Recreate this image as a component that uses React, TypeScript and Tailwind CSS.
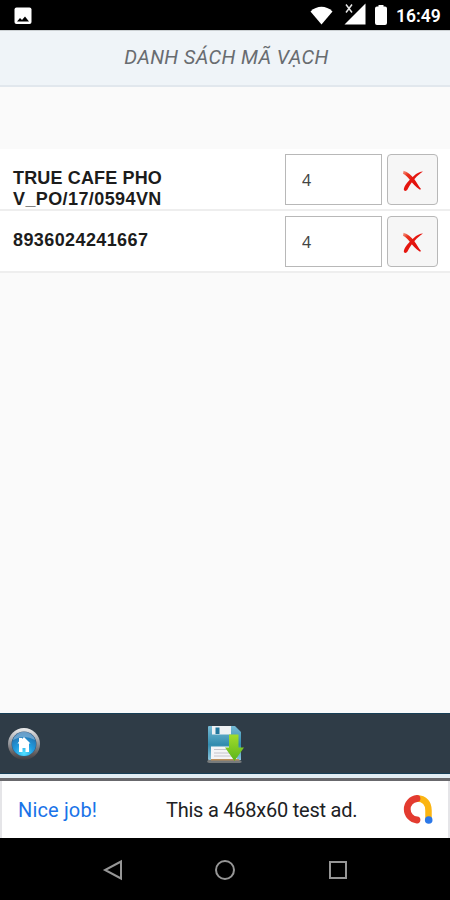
import { useState } from "react";

type BarcodeItem = {
  id: string;
  lines: string[];
  quantity: string;
};

const initialItems: BarcodeItem[] = [
  { id: "1", lines: ["TRUE CAFE PHO", "V_PO/17/0594VN"], quantity: "4" },
  { id: "2", lines: ["8936024241667"], quantity: "4" },
];

function StatusBar() {
  return (
    <div className="flex h-[30px] shrink-0 items-center bg-black pl-[14px] pr-[10px] text-white">
      <svg width="18" height="18" viewBox="0 0 18 18" className="mt-[1px]">
        <rect x="0.5" y="0.5" width="17" height="16.5" rx="2" fill="#fff" />
        <path d="M3 14.500 6 11l2 2 3-3.500 4 5Z" fill="#000" />
      </svg>
      <svg width="23" height="19" viewBox="0 0 23 19" className="ml-auto">
        <path d="M0.5 5.5C7-.7 16-.7 22.5 5.5L11.5 18.5Z" fill="#fff" />
      </svg>
      <svg width="22" height="22" viewBox="0 0 22 22" className="ml-[11px] -mt-[2px]">
        <path d="M21.500.500v21H.500Z" fill="#fff" />
        <path d="M0 0h9.500v10.500H0Z" fill="#000" />
        <path d="m2 1.5 6 8m0-8-6 8" stroke="#e4e4e4" strokeWidth="1.5" />
      </svg>
      <svg width="12" height="20" viewBox="0 0 12 20" className="ml-[9px]">
        <path
          d="M3.500 0h5v1.500H10a2 2 0 0 1 2 2v14.500a2 2 0 0 1-2 2H2a2 2 0 0 1-2-2V3.500a2 2 0 0 1 2-2h1.500Z"
          fill="#fff"
        />
      </svg>
      <span className="ml-[9px] w-[44px] whitespace-nowrap pt-[3px] font-['Roboto',sans-serif] text-[17.500px] font-semibold leading-none">
        16:49
      </span>
    </div>
  );
}

function DeleteIcon() {
  return (
    <svg width="22" height="22" viewBox="0 0 22 22" className="mt-[2px] ml-[1px]">
      <defs>
        <linearGradient id="cross" x1="0" y1="0" x2="0.6" y2="0.7">
          <stop offset="0" stopColor="#f5a08c" />
          <stop offset="0.35" stopColor="#e9301c" />
          <stop offset="1" stopColor="#e3100c" />
        </linearGradient>
      </defs>
      <path d="M1.500.800C6 2 9.500 5.500 12 8.700c3 3.700 4 6.800 7 10.300l-1 .8C13.500 17 10.500 13 8 10 5.800 7.300 3.500 5 1 3.800Z" fill="url(#cross)" />
      <path d="M21 1.500C15.500 5 9.500 11.500 6 18.500c-1 3-4 3-4.200 1 0-3.500 5.200-9.500 9.700-13.300C15 3 18 1.500 21 1.500Z" fill="#e5160f" />
    </svg>
  );
}

function HomeIcon() {
  return (
    <svg width="34" height="34" viewBox="0 0 34 34">
      <defs>
        <linearGradient id="rim" x1="0" y1="0" x2="0" y2="1">
          <stop offset="0" stopColor="#ededee" />
          <stop offset="0.5" stopColor="#929499" />
          <stop offset="0.8" stopColor="#625c5c" />
          <stop offset="1" stopColor="#3b3d43" />
        </linearGradient>
        <radialGradient id="glass" cx="0.5" cy="0.88" r="0.85">
          <stop offset="0" stopColor="#53e2ff" />
          <stop offset="0.45" stopColor="#209ce0" />
          <stop offset="1" stopColor="#256ba5" />
        </radialGradient>
      </defs>
      <circle cx="17" cy="17" r="16" fill="url(#rim)" />
      <circle cx="17" cy="17" r="12.500" fill="#35597a" />
      <circle cx="17" cy="17" r="12" fill="url(#glass)" />
      <path d="M6 13a11.500 11.500 0 0 1 22 0Q17 7 6 13Z" fill="#a9cde9" opacity="0.5" />
      <path d="m17 10 6.500 6.500H22V25h-3.500v-4h-3v4H12v-8.500h-1.500l1.500-2V11h3v1Z" fill="#fff" />
    </svg>
  );
}

function SaveIcon() {
  return (
    <svg width="38" height="39" viewBox="0 0 38 39" className="ml-[2px] mt-[1px]">
      <defs>
        <linearGradient id="disk" x1="0" y1="0" x2="0" y2="1">
          <stop offset="0" stopColor="#76bad4" />
          <stop offset="0.55" stopColor="#318caf" />
          <stop offset="1" stopColor="#8cc5dd" />
        </linearGradient>
        <linearGradient id="arrow" x1="0" y1="0" x2="0" y2="1">
          <stop offset="0" stopColor="#a2dd2b" />
          <stop offset="1" stopColor="#5bb51b" />
        </linearGradient>
      </defs>
      <path d="M1 35h32l2 2-2 1H2l-2-1Z" fill="#777b7c" />
      <path d="M2 1h26l6 6v28H2a1 1 0 0 1-1-1V2a1 1 0 0 1 1-1Z" fill="url(#disk)" />
      <path d="M5 1h19v8.500H5Z" fill="#eef1f3" />
      <path d="M8.500 2.500h4V9h-4Z" fill="#23779d" />
      <path d="M4 21.500h26v12.500H4Z" fill="#f5f5f7" />
      <path d="M7 24.500h18M7 28h18M7 31h18" stroke="#c5c4cc" />
      <path d="M4 34h28v1.500H4Z" fill="#bd905b" />
      <path d="M22 9.500h9.500v13H37L27.500 36l-9.500-13.500h4Z" fill="url(#arrow)" />
    </svg>
  );
}

function ItemRow({
  item,
  onChange,
  onDelete,
}: {
  item: BarcodeItem;
  onChange: (value: string) => void;
  onDelete: () => void;
}) {
  return (
    <div className="flex h-[62px] items-start border-b-2 border-[#eeeeee] bg-white pl-[13px] pr-[12px] pt-[5px]">
      <div className="flex-1 whitespace-nowrap pt-[14px] font-['Liberation_Sans',sans-serif] text-[18px] font-bold leading-[21px] text-[#1c1c1c]">
        {item.lines.map((line) => (
          <p
            key={line}
            className={/\d/.test(line) ? "tracking-[0.400px]" : "tracking-[0.150px]"}
          >
            {line}
          </p>
        ))}
      </div>
      <input
        value={item.quantity}
        onChange={(event) => onChange(event.target.value)}
        className="h-[51px] w-[97px] border border-[#b8b8b8] bg-white pl-[16px] font-['Noto_Sans',sans-serif] text-[16px] text-[#444444] outline-none"
      />
      <button
        type="button"
        onClick={onDelete}
        className="ml-[5px] flex h-[51px] w-[51px] items-center justify-center rounded-[4px] border border-[#b8b8b8] bg-[#f6f6f6]"
      >
        <DeleteIcon />
      </button>
    </div>
  );
}

function AdBanner() {
  return (
    <div className="flex h-[57px] shrink-0 items-center border-x-2 border-[#e5e5e8] bg-white pl-[16px] pr-[15px] font-['Roboto',sans-serif] text-[20px]">
      <span className="w-[148px] whitespace-nowrap tracking-[0.150px] text-[#1a73e8]">
        Nice job!
      </span>
      <span className="whitespace-nowrap tracking-[-0.230px] text-[#202124]">
        This a 468x60 test ad.
      </span>
      <svg width="30" height="30" viewBox="0 0 30 30" className="ml-auto">
        <path d="M14 3.500c8 0 11.500 5 11.500 12v9.500" fill="none" stroke="#fbb512" strokeWidth="6.500" />
        <path d="M14 3.500a10.800 10.800 0 0 0 0 21.500" fill="none" stroke="#e33b30" strokeWidth="6.800" strokeLinecap="round" />
        <circle cx="25.700" cy="25" r="3.800" fill="#2b78e8" />
      </svg>
    </div>
  );
}

function NavigationBar() {
  return (
    <div className="grid h-[62px] shrink-0 grid-cols-[112.500px_112.500px_112.500px] place-content-center place-items-center bg-black pt-[2px]">
      <svg width="22" height="22" viewBox="0 0 22 22">
        <path d="M19 2.500v17L3 11Z" fill="none" stroke="#969696" strokeWidth="2" />
      </svg>
      <svg width="22" height="22" viewBox="0 0 22 22">
        <circle cx="11" cy="11" r="9" fill="none" stroke="#969696" strokeWidth="2" />
      </svg>
      <svg width="22" height="22" viewBox="0 0 22 22">
        <path d="M3 3h16v16H3Z" fill="none" stroke="#969696" strokeWidth="2" />
      </svg>
    </div>
  );
}

export default function App() {
  const [items, setItems] = useState(initialItems);

  return (
    <div className="flex h-[900px] w-[450px] flex-col overflow-hidden bg-[#fafafa]">
      <StatusBar />
      <header className="flex h-[57px] shrink-0 justify-center border-b-2 border-t border-b-[#e1e7ed] border-t-[#cbd0d3] bg-[#eff4f8] pt-[11px]">
        <h1 className="whitespace-nowrap pl-[3px] font-['Roboto',sans-serif] text-[20px] italic leading-[30px] tracking-[0.350px] text-[#686c70]">
          DANH SÁCH MÃ VẠCH
        </h1>
      </header>

      <main className="flex flex-1 flex-col pt-[62px]">
        {items.map((item) => (
          <ItemRow
            key={item.id}
            item={item}
            onChange={(quantity) =>
              setItems(items.map((row) => (row.id === item.id ? { ...row, quantity } : row)))
            }
            onDelete={() => setItems(items.filter((row) => row.id !== item.id))}
          />
        ))}
      </main>

      <div className="grid h-[61px] shrink-0 grid-cols-3 items-center border-y border-t-[#173f57] border-b-[#173f57] bg-[#2f3c47] px-[7px] pt-px">
        <button type="button" className="w-[34px]">
          <HomeIcon />
        </button>
        <button type="button" className="justify-self-center">
          <SaveIcon />
        </button>
      </div>
      <div className="h-[7px] shrink-0 border-b-[3px] border-t-[4px] border-b-[#68686c] border-t-[#e2edf4]" />
      <AdBanner />
      <NavigationBar />
    </div>
  );
}
